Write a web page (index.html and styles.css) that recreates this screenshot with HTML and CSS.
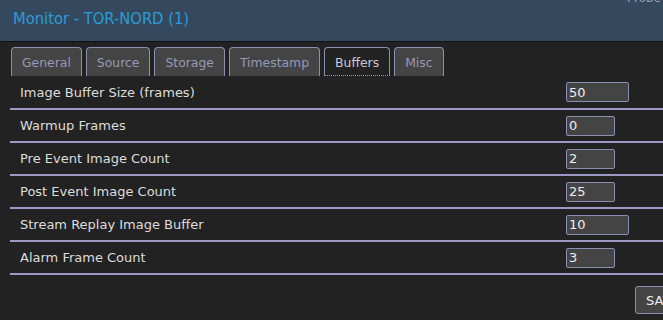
FILE: index.html
```html
<!DOCTYPE html>
<html lang="en">
<head>
  <meta charset="UTF-8">
  <title>Monitor - TOR-NORD (1)</title>
  <link rel="stylesheet" href="styles.css">
</head>
<body>
  <div class="header">
    <h2>Monitor - TOR-NORD (1)</h2>
    <span class="probe">Probe</span>
  </div>
  <div class="content">
    <ul class="tabs">
      <li>General</li>
      <li>Source</li>
      <li>Storage</li>
      <li>Timestamp</li>
      <li class="active">Buffers</li>
      <li>Misc</li>
    </ul>
    <table class="settings">
      <tr>
        <td class="label">Image Buffer Size (frames)</td>
        <td class="field"><input type="text" class="wide" value="50"></td>
      </tr>
      <tr>
        <td class="label">Warmup Frames</td>
        <td class="field"><input type="text" value="0"></td>
      </tr>
      <tr>
        <td class="label">Pre Event Image Count</td>
        <td class="field"><input type="text" value="2"></td>
      </tr>
      <tr>
        <td class="label">Post Event Image Count</td>
        <td class="field"><input type="text" value="25"></td>
      </tr>
      <tr>
        <td class="label">Stream Replay Image Buffer</td>
        <td class="field"><input type="text" class="wide" value="10"></td>
      </tr>
      <tr>
        <td class="label">Alarm Frame Count</td>
        <td class="field"><input type="text" value="3"></td>
      </tr>
    </table>
    <div class="buttons">
      <button>SAVE</button>
    </div>
  </div>
</body>
</html>
```
FILE: styles.css
```css
html, body {
  overflow: hidden;
}
body {
  margin: 0;
  background-color: #222222;
  font-family: 'DejaVu Sans', sans-serif;
  font-size: 12px;
  color: #dddddd;
}
.header {
  position: relative;
  height: 41px;
  background-color: #34495e;
  border-bottom: 1px solid #111111;
}
.header h2 {
  margin: 0;
  padding: 9px 0 0 13px;
  font-family: 'DejaVu Sans Condensed', sans-serif;
  font-weight: normal;
  font-size: 16.4px;
  color: #2d9bd8;
}
.probe {
  position: absolute;
  right: 2px;
  top: -9px;
  font-size: 12px;
  color: #9aa4b8;
}
.content {
  width: 760px;
  padding: 5px 0 0 10px;
}
.tabs {
  display: flex;
  gap: 4px;
  margin: 0;
  padding: 0;
  list-style: none;
}
.tabs li {
  padding: 7px 10px 0;
  height: 21px;
  background-color: #444444;
  border: 1px solid #8e8eb4;
  border-bottom: none;
  border-radius: 4px 4px 0 0;
  font-size: 12.4px;
  color: #9898b8;
}
.tabs li:first-child {
  margin-left: 1px;
}
.tabs li.active {
  background-color: #222222;
  color: #c8c8dc;
  height: 20px;
  border-bottom: 1px dotted #9999aa;
}
.settings {
  width: 100%;
  border-collapse: collapse;
}
.settings td {
  height: 31px;
  padding: 0;
  border-bottom: 2px solid #9a9ac4;
}
.settings tr:first-child td {
  height: 32px;
}
.label {
  padding-left: 10px !important;
  font-size: 13px;
  color: #dddddd;
  width: 546px;
}
.field input {
  width: 49px;
  height: 20px;
  box-sizing: border-box;
  padding: 0 2px;
  background-color: #444444;
  border: 1px solid #8e8eb4;
  border-radius: 2px;
  color: #eeeeee;
  font-family: 'DejaVu Sans', sans-serif;
  font-size: 13px;
}
.field input.wide {
  width: 63px;
}
.buttons {
  padding: 11px 0 0 625px;
}
.buttons button {
  height: 28px;
  padding: 0 10px;
  background-color: #444444;
  border: 1px solid #8e8eb4;
  border-radius: 3px;
  color: #eeeeee;
  font-family: 'DejaVu Sans', sans-serif;
  font-size: 13px;
}
```
